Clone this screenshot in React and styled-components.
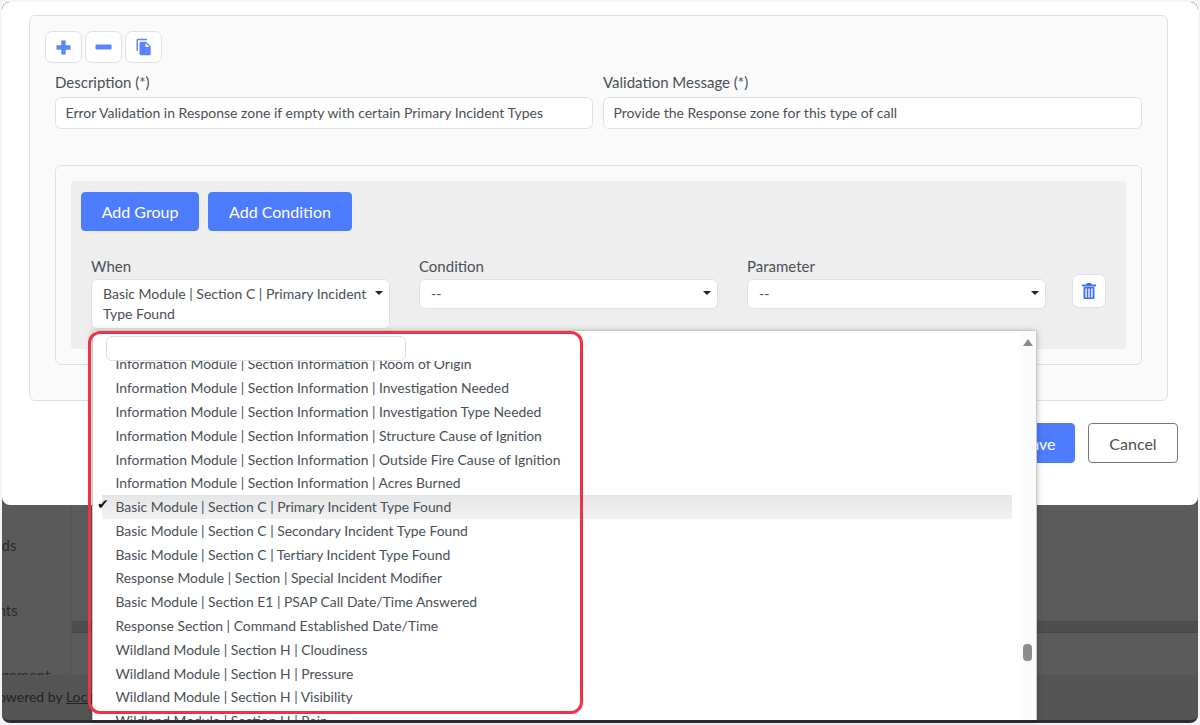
import React from 'react'
import styled, { createGlobalStyle } from 'styled-components'
import { MdFileCopy } from 'react-icons/md'

const GlobalStyle = createGlobalStyle`
	html, body {
		margin: 0;
		padding: 0;
		background: #f5f5f8;
		font-family: 'Lato', 'Liberation Sans', sans-serif;
		color: #495057;
	}
	* {
		box-sizing: border-box;
	}
`

const Frame = styled.div`
	position: relative;
	width: 1200px;
	height: 725px;
	padding: 2px;
	overflow: hidden;
`

const Screen = styled.div`
	display: flex;
	flex-direction: column;
	height: 100%;
	border-radius: 8px;
	overflow: hidden;
	background: #595959;
	border-bottom: 3px solid #2f2f33;
`

const Modal = styled.div`
	flex: 0 0 503px;
	display: flex;
	flex-direction: column;
	padding: 13px 20px 0 27px;
	background: #fff;
	border-radius: 8px;
`

const Panel = styled.section`
	width: 1139px;
	height: 386px;
	padding: 15px 25px 0 15px;
	background: #fafafa;
	border: 1px solid #e0e0e0;
	border-radius: 6px;
`

const Toolbar = styled.div`
	display: flex;
	gap: 3px;
`

const IconButton = styled.button`
	display: flex;
	align-items: center;
	justify-content: center;
	width: ${(p) => p.$size || 37}px;
	height: ${(p) => p.$size || 32}px;
	padding: 0;
	color: #5a85fe;
	font-size: ${(p) => p.$icon || 14}px;
	background: #fff;
	border: 1px solid #e0e0e0;
	border-radius: 7px;
`

const FieldRow = styled.div`
	display: grid;
	grid-template-columns: 538px 539px;
	gap: 10px;
	margin: 9px 0 0 10px;
`

const Label = styled.label`
	display: block;
	font-size: 15px;
	line-height: 20px;
	color: #495057;
`

const TextInput = styled.div`
	height: 32px;
	margin-top: 5px;
	padding: 0 9.5px;
	font-size: 14px;
	line-height: 30px;
	background: #fff;
	border: 1px solid #e0e0e0;
	border-radius: 6px;
`

const Builder = styled.div`
	width: 1087px;
	height: 200px;
	margin: 36px 0 0 10px;
	padding: 15px;
	background: #fafafa;
	border: 1px solid #e0e0e0;
	border-radius: 6px;
`

const Group = styled.div`
	height: 168px;
	padding: 11px 10px;
	background: #eee;
	border-radius: 4px;
`

const GroupActions = styled.div`
	display: flex;
	gap: 9px;
`

const PrimaryButton = styled.button`
	width: ${(p) => p.$width}px;
	height: ${(p) => p.$height || 39}px;
	padding: 0;
	font-family: inherit;
	font-size: 16px;
	color: #fff;
	background: #4d7cfe;
	border: 1px solid #4d7cfe;
	border-radius: 4px;
`

const Conditions = styled.div`
	display: grid;
	grid-template-columns: repeat(3, 299px) 34px;
	column-gap: 29px;
	margin: 25px 0 0 10px;
`

const Select = styled.div`
	display: flex;
	justify-content: space-between;
	margin-top: 3px;
	min-height: 30px;
	padding: 4px 6px 4px 11px;
	font-size: 14px;
	line-height: 20px;
	background: #fff;
	border: 1px solid #e0e0e0;
	border-radius: 6px;

	&::after {
		content: '';
		flex: none;
		width: 0;
		height: 0;
		margin: 7px 0 0 4px;
		border-left: 4.5px solid transparent;
		border-right: 4.5px solid transparent;
		border-top: 4.5px solid #222;
	}
`

const SelectText = styled.span`
	max-width: 270px;
`

const TrashCell = styled.div`
	padding-top: 18px;
	margin-left: -3px;
`

const ModalFooter = styled.div`
	display: flex;
	justify-content: flex-end;
	gap: 13px;
	margin-top: 22px;
`

const CancelButton = styled.button`
	width: 90px;
	height: 40px;
	padding: 0;
	font-family: inherit;
	font-size: 16px;
	color: #495057;
	background: #fff;
	border: 1px solid #777;
	border-radius: 4px;
`

const Backdrop = styled.div`
	flex: 1;
	display: flex;
	flex-direction: column;
	min-height: 0;
`

const BackdropBody = styled.div`
	flex: 1;
	display: flex;
	min-height: 0;
`

const Sidebar = styled.nav`
	flex: 0 0 70px;
	overflow: hidden;
	background: #5a5a5a;
	border-right: 1px solid #555;
	color: #2b2b2b;
	font-size: 15px;
`

const SidebarItem = styled.div`
	height: ${(p) => p.$height}px;
	margin-left: ${(p) => p.$shift}px;
	padding-top: ${(p) => p.$top}px;
	white-space: nowrap;
	line-height: 20px;
`

const Content = styled.div`
	flex: 1;
	padding-top: 116px;
	background: #5b5b5b;
`

const TableBand = styled.div`
	height: 12px;
	background: #4d4e50;
	border-top: 1px solid #474747;
	border-bottom: 1px solid #474747;
`

const BackdropFooter = styled.footer`
	flex: 0 0 45px;
	padding: 13px 0 0 0;
	overflow: hidden;
	background: #555;
	color: #222;
	font-size: 14px;
	white-space: nowrap;
	text-indent: -12px;
`

const FooterLink = styled.span`
	text-decoration: underline;
`

const Dropdown = styled.div`
	position: absolute;
	left: 92px;
	top: 330px;
	width: 945px;
	height: 390px;
	display: flex;
	flex-direction: column;
	background: #fff;
	border: 1px solid #c8c8c8;
	border-bottom: 0;
	border-radius: 3px 3px 0 0;
	box-shadow: 0 1px 6px rgba(0, 0, 0, 0.25);
`

const SearchBox = styled.div`
	flex: 0 0 25px;
	width: 300px;
	margin: 5px 0 0 13px;
	background: #fff;
	border: 1px solid #ddd;
	border-radius: 6px;
`

const Options = styled.ul`
	flex: 1;
	min-height: 0;
	margin: 0;
	padding: 0 24px 0 9px;
	overflow: hidden;
	list-style: none;
	font-size: 13.9px;
`

const Option = styled.li`
	position: relative;
	height: 23.8px;
	padding-left: 13.5px;
	line-height: 23.8px;
	white-space: nowrap;
	background: ${(p) => (p.$selected ? 'linear-gradient(#e6e6e6, #f2f2f2)' : 'transparent')};

	&:first-child {
		margin-top: -8.7px;
	}
`

const Check = styled.span`
	position: absolute;
	left: -5px;
	top: -3px;
	color: #111;
	font-size: 14px;
`

const ScrollTrack = styled.div`
	position: absolute;
	top: 0;
	right: 0;
	bottom: 0;
	width: 16px;
	background: #fbfbfb;
`

const ScrollArrow = styled.div`
	position: absolute;
	top: 8px;
	left: 3px;
	width: 0;
	height: 0;
	border-left: 5px solid transparent;
	border-right: 5px solid transparent;
	border-bottom: 7px solid #8a8a8a;
`

const ScrollThumb = styled.div`
	position: absolute;
	top: 313px;
	left: 3px;
	width: 9px;
	height: 17px;
	border-radius: 4px;
	background: #8c8c8c;
`

const Highlight = styled.div`
	position: absolute;
	left: 88px;
	top: 331px;
	width: 495px;
	height: 383px;
	border: 3px solid #ee3344;
	border-radius: 12px;
	pointer-events: none;
`

const PlusIcon = () => (
	<svg width="15" height="15" viewBox="0 0 15 15">
		<path d="M7.5 0.5v14M0.5 7.5h14" stroke="currentColor" strokeWidth="4.4" />
	</svg>
)

const MinusIcon = () => (
	<svg width="17" height="6" viewBox="0 0 17 6">
		<rect x="0.5" y="0.5" width="16" height="5" rx="1" fill="currentColor" />
	</svg>
)

const TrashIcon = () => (
	<svg width="14" height="16" viewBox="0 0 14 16">
		<rect x="4.5" y="0" width="5" height="2.5" rx="0.8" fill="#3f6ffc" />
		<rect x="0" y="1.6" width="14" height="2" rx="0.5" fill="#3f6ffc" />
		<rect x="1.5" y="4" width="11" height="12" rx="1" fill="#3f6ffc" />
		<rect x="3.3" y="5.5" width="1.6" height="9" fill="#dfe6ff" />
		<rect x="6.2" y="5.5" width="1.6" height="9" fill="#dfe6ff" />
		<rect x="9.1" y="5.5" width="1.6" height="9" fill="#dfe6ff" />
	</svg>
)

const options = [
	'Information Module | Section Information | Room of Origin',
	'Information Module | Section Information | Investigation Needed',
	'Information Module | Section Information | Investigation Type Needed',
	'Information Module | Section Information | Structure Cause of Ignition',
	'Information Module | Section Information | Outside Fire Cause of Ignition',
	'Information Module | Section Information | Acres Burned',
	'Basic Module | Section C | Primary Incident Type Found',
	'Basic Module | Section C | Secondary Incident Type Found',
	'Basic Module | Section C | Tertiary Incident Type Found',
	'Response Module | Section | Special Incident Modifier',
	'Basic Module | Section E1 | PSAP Call Date/Time Answered',
	'Response Section | Command Established Date/Time',
	'Wildland Module | Section H | Cloudiness',
	'Wildland Module | Section H | Pressure',
	'Wildland Module | Section H | Visibility',
	'Wildland Module | Section H | Rain',
]

const selected = 'Basic Module | Section C | Primary Incident Type Found'

const App = () => {
	return (
		<Frame>
			<GlobalStyle />
			<Screen>
				<Modal>
					<Panel>
						<Toolbar>
							<IconButton><PlusIcon /></IconButton>
							<IconButton><MinusIcon /></IconButton>
							<IconButton $icon={18}><MdFileCopy /></IconButton>
						</Toolbar>
						<FieldRow>
							<div>
								<Label>Description (*)</Label>
								<TextInput>Error Validation in Response zone if empty with certain Primary Incident Types</TextInput>
							</div>
							<div>
								<Label>Validation Message (*)</Label>
								<TextInput>Provide the Response zone for this type of call</TextInput>
							</div>
						</FieldRow>
						<Builder>
							<Group>
								<GroupActions>
									<PrimaryButton $width={118}>Add Group</PrimaryButton>
									<PrimaryButton $width={144}>Add Condition</PrimaryButton>
								</GroupActions>
								<Conditions>
									<div>
										<Label>When</Label>
										<Select><SelectText>Basic Module | Section C | Primary Incident Type Found</SelectText></Select>
									</div>
									<div>
										<Label>Condition</Label>
										<Select><SelectText>--</SelectText></Select>
									</div>
									<div>
										<Label>Parameter</Label>
										<Select><SelectText>--</SelectText></Select>
									</div>
									<TrashCell>
										<IconButton $size={34}><TrashIcon /></IconButton>
									</TrashCell>
								</Conditions>
							</Group>
						</Builder>
					</Panel>
					<ModalFooter>
						<PrimaryButton $width={72} $height={40}>Save</PrimaryButton>
						<CancelButton>Cancel</CancelButton>
					</ModalFooter>
				</Modal>
				<Backdrop>
					<BackdropBody>
						<Sidebar>
							<SidebarItem $height={65} $top={30} $shift={-38}>Records</SidebarItem>
							<SidebarItem $height={65} $top={30} $shift={-44}>Incidents</SidebarItem>
							<SidebarItem $height={40} $top={30} $shift={-38}>Management</SidebarItem>
						</Sidebar>
						<Content>
							<TableBand />
						</Content>
					</BackdropBody>
					<BackdropFooter>
						Powered by <FooterLink>LocalGov</FooterLink>
					</BackdropFooter>
				</Backdrop>
			</Screen>
			<Dropdown>
				<SearchBox />
				<Options>
					{options.map((o) => (
						<Option key={o} $selected={o === selected}>
							{o === selected && <Check>✔</Check>}
							{o}
						</Option>
					))}
				</Options>
				<ScrollTrack>
					<ScrollArrow />
					<ScrollThumb />
				</ScrollTrack>
			</Dropdown>
			<Highlight />
		</Frame>
	)
}

export default App
